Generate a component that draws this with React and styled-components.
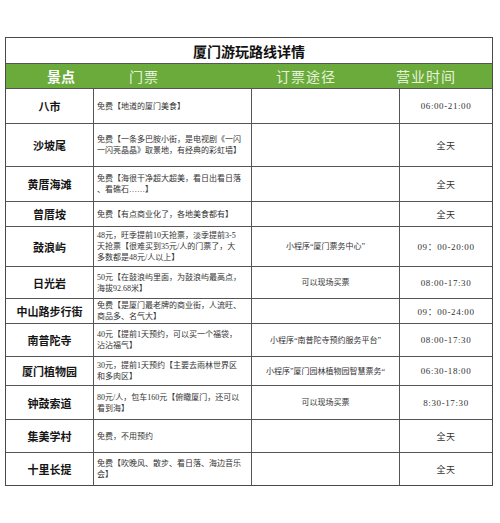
import React from 'react';
import styled, { createGlobalStyle } from 'styled-components';

const GlobalStyle = createGlobalStyle`
  * { box-sizing: border-box; }
  body {
    margin: 0;
    background: #fff;
    font-family: "Noto Sans CJK SC", "Noto Sans", sans-serif;
  }
`;

const SERIF = `"Liberation Serif", "Noto Sans CJK SC", serif`;

const Page = styled.div`
  padding: 37px 0 0 5px;
  width: 500px;
  height: 523px;
`;

const Table = styled.div`
  width: 488px;
  border: 1px solid #4a4a4a;
  display: flex;
  flex-direction: column;
`;

const Title = styled.div`
  height: 26px;
  display: flex;
  align-items: center;
  justify-content: center;
  font-size: 14px;
  font-weight: 700;
  color: #111;
  border-bottom: 1px solid #555;
  padding-top: 1px;
`;

const Header = styled.div`
  height: 24px;
  background: #6aab3c;
  display: grid;
  grid-template-columns: 110px 56px 74px 120px 120px;
  align-items: center;
`;

const HeadCell = styled.div`
  grid-column: ${p => p.$col};
  text-align: center;
  color: ${p => (p.$bold ? '#ffffff' : '#e9f3dc')};
  font-family: ${p => (p.$bold ? `"Noto Sans CJK SC", sans-serif` : SERIF)};
  font-weight: ${p => (p.$bold ? 700 : 400)};
  font-size: 14px;
  letter-spacing: ${p => (p.$bold ? '0' : '1px')};
  white-space: nowrap;
`;

const Row = styled.div`
  height: ${p => p.$h}px;
  display: grid;
  grid-template-columns: 87px 158px 148px 1fr;
  border-top: 1px solid #555;
`;

const Cell = styled.div`
  display: flex;
  align-items: center;
  border-left: ${p => (p.$first ? 'none' : '1px solid #555')};
  justify-content: ${p => (p.$left ? 'flex-start' : 'center')};
  text-align: ${p => (p.$left ? 'left' : 'center')};
  padding: ${p => (p.$left ? '0 2px 0 3px' : '0')};
  overflow: hidden;
`;

const Name = styled.span`
  font-size: 11px;
  font-weight: 700;
  color: #151515;
  white-space: nowrap;
`;

const Info = styled.span`
  font-family: ${SERIF};
  font-size: 8px;
  line-height: 11px;
  color: #333;
  white-space: nowrap;
`;

const Time = styled.span`
  font-family: ${SERIF};
  font-size: 9px;
  letter-spacing: 0.6px;
  color: #333;
  white-space: nowrap;
`;

const rows = [
  { name: '八市', info: ['免费【地道的厦门美食】'], way: '', time: '06:00-21:00', h: 35 },
  { name: '沙坡尾', info: ['免费【一条多巴胺小街，是电视剧《一闪', '一闪亮晶晶》取景地，有经典的彩虹墙】'], way: '', time: '全天', h: 43 },
  { name: '黄厝海滩', info: ['免费【海很干净超大超美，看日出看日落', '、看礁石……】'], way: '', time: '全天', h: 35 },
  { name: '曾厝垵', info: ['免费【有点商业化了，各地美食都有】'], way: '', time: '全天', h: 25 },
  { name: '鼓浪屿', info: ['48元，旺季提前10天抢票，淡季提前3-5', '天抢票【很难买到35元/人的门票了，大', '多数都是48元/人以上】'], way: '小程序“厦门票务中心”', time: '09：00-20:00', h: 40 },
  { name: '日光岩', info: ['50元【在鼓浪屿里面，为鼓浪屿最高点，', '海拔92.68米】'], way: '可以现场买票', time: '08:00-17:30', h: 32 },
  { name: '中山路步行街', info: ['免费【是厦门最老牌的商业街，人流旺、', '商品多、名气大】'], way: '', time: '09：00-24:00', h: 25 },
  { name: '南普陀寺', info: ['40元【提前1天预约，可以买一个福袋，', '沾沾福气】'], way: '小程序“南普陀寺预约服务平台”', time: '08:00-17:30', h: 33 },
  { name: '厦门植物园', info: ['30元，提前1天预约【主要去雨林世界区', '和多肉区】'], way: '小程序”厦门园林植物园智慧票务“', time: '06:30-18:00', h: 29 },
  { name: '钟鼓索道', info: ['80元/人，包车160元【俯瞰厦门，还可以', '看到海】'], way: '可以现场买票', time: '8:30-17:30', h: 34 },
  { name: '集美学村', info: ['免费，不用预约'], way: '', time: '全天', h: 33 },
  { name: '十里长提', info: ['免费【吹晚风、散步、看日落、海边音乐', '会】'], way: '', time: '全天', h: 33 },
];

export default function App() {
  return (
    <Page>
      <GlobalStyle />
      <Table>
        <Title>厦门游玩路线详情</Title>
        <Header>
          <HeadCell $col={1} $bold>景点</HeadCell>
          <HeadCell $col={2}>门票</HeadCell>
          <HeadCell $col={4}>订票途径</HeadCell>
          <HeadCell $col={5}>营业时间</HeadCell>
        </Header>
        {rows.map(r => (
          <Row key={r.name} $h={r.h}>
            <Cell $first>
              <Name>{r.name}</Name>
            </Cell>
            <Cell $left>
              <Info>
                {r.info.map((line, i) => (
                  <React.Fragment key={i}>
                    {i > 0 && <br />}
                    {line}
                  </React.Fragment>
                ))}
              </Info>
            </Cell>
            <Cell>
              <Info>{r.way}</Info>
            </Cell>
            <Cell>
              <Time>{r.time}</Time>
            </Cell>
          </Row>
        ))}
      </Table>
    </Page>
  );
}
